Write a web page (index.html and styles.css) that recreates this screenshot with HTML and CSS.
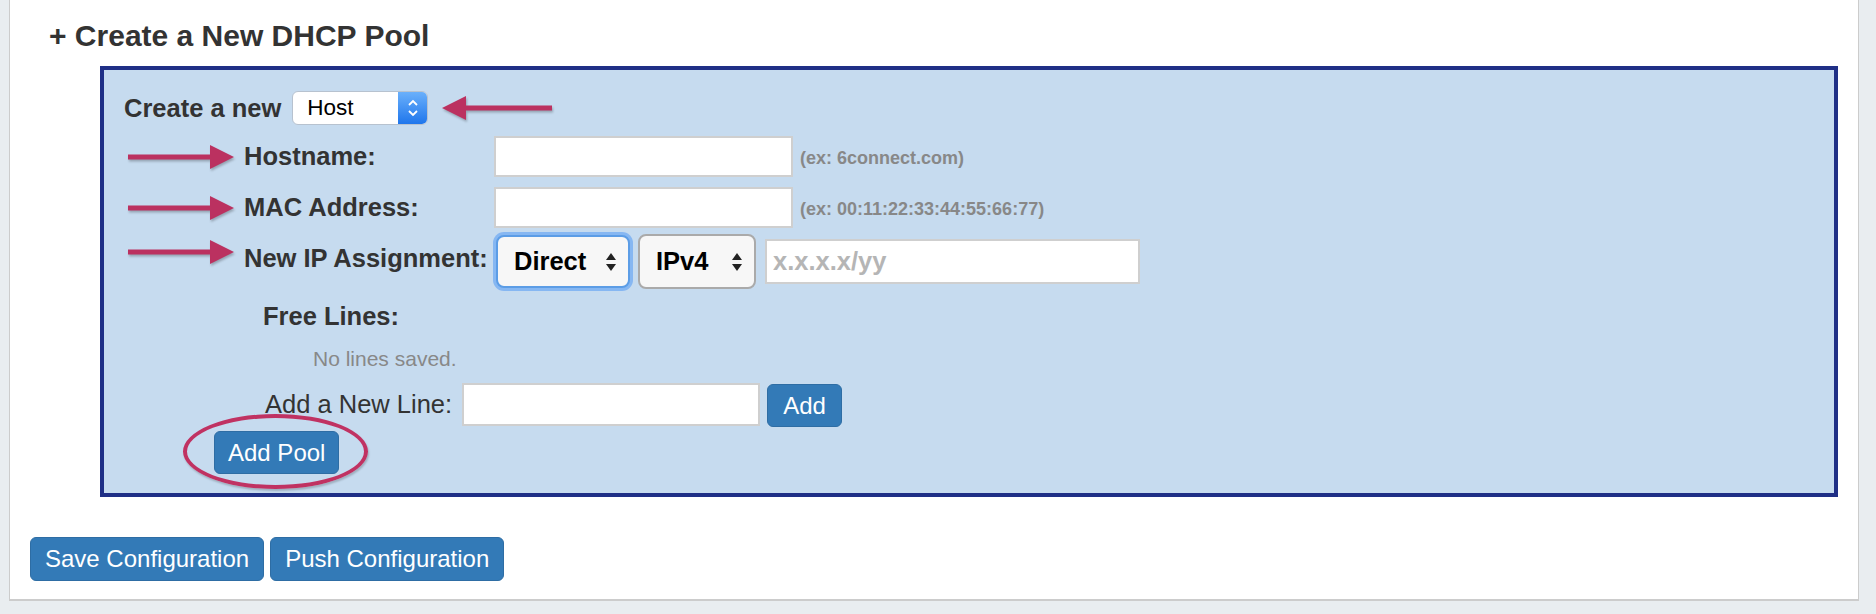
FILE: index.html
```html
<!DOCTYPE html>
<html lang="en">

<head>
    <meta charset="UTF-8">
    <meta name="viewport" content="width=device-width, initial-scale=1.0">
    <title>DHCP Pools</title>
    <link rel="stylesheet" href="styles.css">
</head>

<body>
    <div class="panel">
        <h2 class="title">+ Create a New DHCP Pool</h2>

        <div class="pool-box">
            <div class="create-row">
                <span class="create-label">Create a new</span>
                <div class="host-select">
                    <span>Host</span>
                    <span class="stepper">
                        <svg width="12" height="22" viewBox="0 0 12 22">
                            <polyline points="2,8 6,4 10,8" fill="none" stroke="#fff" stroke-width="1.8" />
                            <polyline points="2,14 6,18 10,14" fill="none" stroke="#fff" stroke-width="1.8" />
                        </svg>
                    </span>
                </div>
                <svg class="arrow arrow-left" viewBox="0 0 110 30">
                    <path d="M110 12.5H24V3L0 15L24 27V17.5H110Z" />
                </svg>
            </div>

            <div class="field-row">
                <svg class="arrow" viewBox="0 0 106 30">
                    <path d="M0 12.5H82V3L106 15L82 27V17.5H0Z" />
                </svg>
                <label class="field-label">Hostname:</label>
                <input type="text" class="text-input">
                <span class="hint">(ex: 6connect.com)</span>
            </div>

            <div class="field-row mac-row">
                <svg class="arrow" viewBox="0 0 106 30">
                    <path d="M0 12.5H82V3L106 15L82 27V17.5H0Z" />
                </svg>
                <label class="field-label">MAC Address:</label>
                <input type="text" class="text-input">
                <span class="hint">(ex: 00:11:22:33:44:55:66:77)</span>
            </div>

            <div class="field-row ip-row">
                <svg class="arrow" viewBox="0 0 106 30">
                    <path d="M0 12.5H82V3L106 15L82 27V17.5H0Z" />
                </svg>
                <label class="field-label">New IP Assignment:</label>
                <div class="ip-select focused">
                    <span>Direct</span>
                    <svg width="10" height="22" viewBox="0 0 10 22">
                        <polygon points="0,9 5,2 10,9" />
                        <polygon points="0,13 10,13 5,20" />
                    </svg>
                </div>
                <div class="ip-select version">
                    <span>IPv4</span>
                    <svg width="10" height="22" viewBox="0 0 10 22">
                        <polygon points="0,9 5,2 10,9" />
                        <polygon points="0,13 10,13 5,20" />
                    </svg>
                </div>
                <input type="text" class="ip-input" placeholder="x.x.x.x/yy">
            </div>

            <div class="free-title">Free Lines:</div>
            <div class="no-lines">No lines saved.</div>
            <div class="new-line-row">
                <label class="new-line-label">Add a New Line:</label>
                <input type="text" class="text-input line-input">
                <button class="btn btn-add">Add</button>
            </div>

            <div class="pool-actions">
                <span class="circled">
                    <button class="btn">Add Pool</button>
                    <span class="ring"></span>
                </span>
            </div>
        </div>

        <div class="config-actions">
            <button class="btn">Save Configuration</button>
            <button class="btn">Push Configuration</button>
        </div>
    </div>
</body>

</html>
```

FILE: styles.css
```css
body {
    margin: 0;
    background-color: #e9edf0;
    font-family: "Liberation Sans", Arial, sans-serif;
    color: #333;
}

.panel {
    margin: 0 17px 0 9px;
    background-color: white;
    border: 1px solid #ccc;
    border-top: none;
    border-bottom-width: 2px;
    padding: 18px 0 18px 0;
}

.title {
    margin: 0 0 12px 39px;
    font-size: 30px;
    line-height: 36px;
    font-weight: bold;
}

.pool-box {
    margin: 0 20px 0 90px;
    border: 4px solid #1f2f86;
    background-color: #c6dbef;
    padding: 21px 0 19px 0;
}

.create-row {
    display: flex;
    align-items: center;
    height: 34px;
    padding-left: 20px;
}

.create-label {
    font-size: 25.5px;
    font-weight: bold;
    margin-right: 11px;
}

.host-select {
    width: 136px;
    height: 34px;
    box-sizing: border-box;
    border: 1px solid #b7c2cf;
    border-radius: 6px;
    background-color: white;
    display: flex;
    align-items: center;
    justify-content: space-between;
    padding-left: 14px;
    font-size: 22.5px;
    color: #000;
    overflow: hidden;
}

.stepper {
    width: 29px;
    height: 100%;
    background: linear-gradient(#6ab0fb, #1f76ec);
    display: flex;
    align-items: center;
    justify-content: center;
}

.arrow {
    width: 106px;
    height: 30px;
    flex-shrink: 0;
    fill: #bb3160;
    filter: drop-shadow(1px 2px 1px rgba(0, 0, 0, 0.25));
}

.arrow-left {
    width: 110px;
    margin-left: 14px;
}

.field-row {
    display: flex;
    align-items: center;
    padding-left: 24px;
    margin-top: 11px;
}

.mac-row {
    margin-top: 10px;
}

.field-label {
    width: 260px;
    flex-shrink: 0;
    box-sizing: border-box;
    padding-left: 10px;
    font-size: 25.5px;
    font-weight: bold;
    white-space: nowrap;
}

.text-input {
    width: 299px;
    height: 41px;
    box-sizing: border-box;
    border: 2px solid #cfcfcf;
    background-color: white;
    margin: 0;
}

.hint {
    margin: 4px 0 0 7px;
    font-size: 18px;
    font-weight: bold;
    color: #888;
}

.ip-row {
    margin-top: 6px;
}

.ip-row .arrow {
    margin-bottom: 20px;
}

.ip-row .field-label {
    margin-bottom: 6px;
}

.ip-select {
    height: 53px;
    box-sizing: border-box;
    border: 2px solid #aaa;
    border-radius: 8px;
    background-color: #f7f7f7;
    display: flex;
    align-items: center;
    justify-content: space-between;
    padding: 0 12px 0 16px;
    font-size: 25.5px;
    font-weight: bold;
    color: #000;
}

.ip-select svg {
    fill: #222;
}

.focused {
    width: 134px;
    margin-left: 2px;
    border-color: #5c9de6;
    box-shadow: 0 0 0 3px #86b7f2;
}

.version {
    width: 118px;
    margin-left: 8px;
    height: 55px;
}

.ip-input {
    width: 375px;
    height: 45px;
    box-sizing: border-box;
    margin-left: 9px;
    border: 2px solid #cfcfcf;
    padding-left: 6px;
    font-family: inherit;
    font-size: 25.5px;
    font-weight: bold;
}

.ip-input::placeholder {
    color: #b5b5b5;
}

.free-title {
    margin-top: 12px;
    padding-left: 159px;
    font-size: 25.5px;
    line-height: 30px;
    font-weight: bold;
}

.no-lines {
    margin-top: 15px;
    padding-left: 209px;
    font-size: 21px;
    line-height: 26px;
    color: #888;
}

.new-line-row {
    display: flex;
    align-items: center;
    margin-top: 10px;
    padding-left: 161px;
}

.new-line-label {
    font-size: 25.5px;
    margin-right: 10px;
}

.line-input {
    width: 298px;
    height: 43px;
}

.btn {
    height: 44px;
    padding: 0 14px;
    border: 1px solid #2e6da4;
    border-radius: 6px;
    background-color: #337ab7;
    color: white;
    font-family: inherit;
    font-size: 24px;
}

.btn-add {
    height: 43px;
    margin: 2px 0 0 7px;
    padding: 0 15px;
}

.pool-actions {
    margin-top: 4px;
    padding-left: 110px;
}

.circled {
    position: relative;
    display: inline-block;
    vertical-align: top;
}

.circled .btn {
    height: 43px;
    padding: 0 13px;
}

.ring {
    position: absolute;
    left: -31px;
    top: -17px;
    width: 185px;
    height: 75px;
    box-sizing: border-box;
    border: 4px solid #c03262;
    border-radius: 50%;
    box-shadow: 1px 2px 2px rgba(0, 0, 0, 0.2);
}

.config-actions {
    display: flex;
    gap: 6px;
    margin: 40px 0 0 20px;
}
```
